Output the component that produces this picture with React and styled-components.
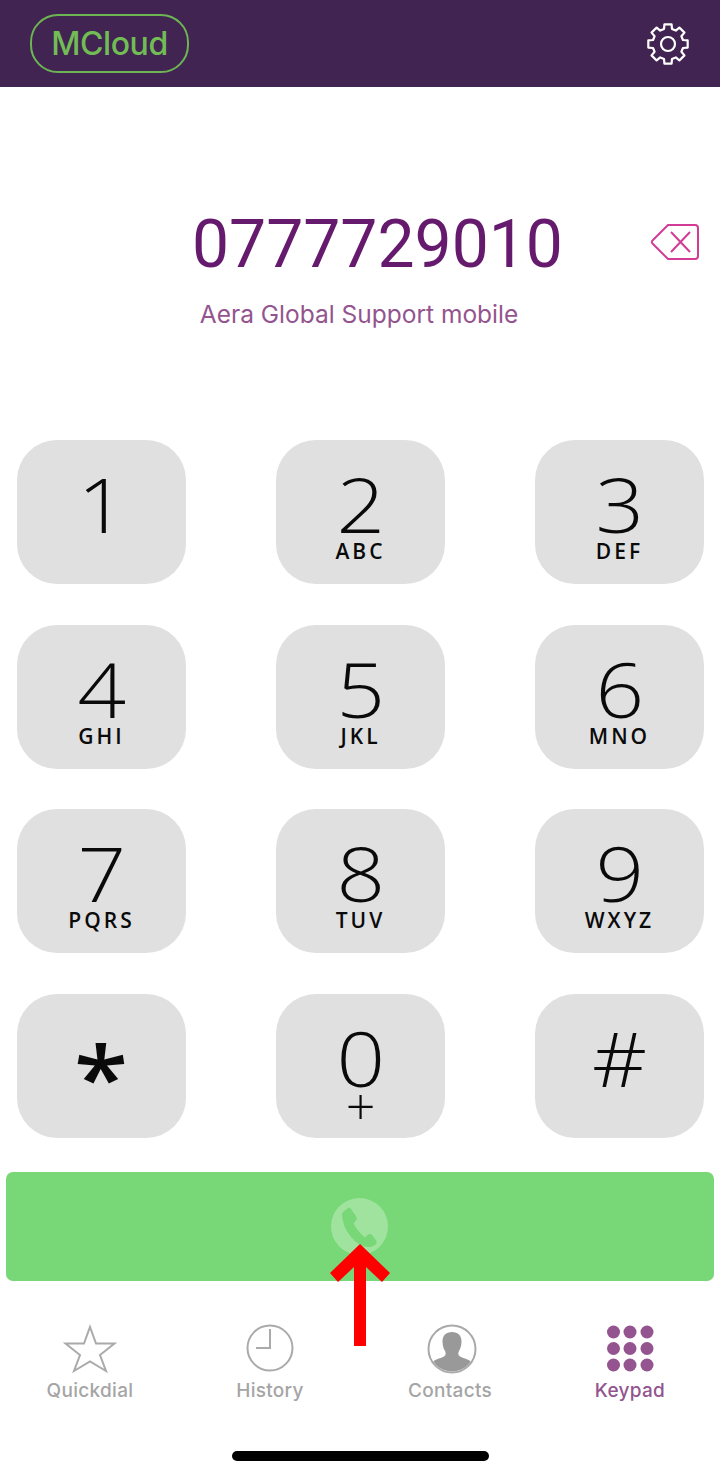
import React from "react";
import styled, { createGlobalStyle } from "styled-components";

const GlobalStyle = createGlobalStyle`
  html, body {
    margin: 0;
    padding: 0;
    background: #fff;
  }
  * {
    box-sizing: border-box;
  }
`;

const keys = [
  ["1", ""],
  ["2", "ABC"],
  ["3", "DEF"],
  ["4", "GHI"],
  ["5", "JKL"],
  ["6", "MNO"],
  ["7", "PQRS"],
  ["8", "TUV"],
  ["9", "WXYZ"],
  ["*", ""],
  ["0", "+"],
  ["#", ""],
];

// eight square teeth round a hub
const gearPath = () => {
  const points = [];
  for (let i = 0; i < 8; i++) {
    const mid = (i * Math.PI) / 4 - Math.PI / 2;
    [
      [15.5, -0.26],
      [20, -0.18],
      [20, 0.18],
      [15.5, 0.26],
    ].forEach(([r, offset]) => {
      points.push(
        `${(24 + r * Math.cos(mid + offset)).toFixed(2)} ${(24 + r * Math.sin(mid + offset)).toFixed(2)}`
      );
    });
  }
  return `M${points.join("L")}Z`;
};

const GearIcon = () => (
  <svg width="48" height="48" viewBox="0 0 48 48" fill="none" stroke="#fff" strokeWidth="2.2" strokeLinejoin="round">
    <path d={gearPath()} />
    <circle cx="24" cy="24" r="7" />
  </svg>
);

const PhoneIcon = () => (
  <svg width="38" height="42" viewBox="0 0 38 42" fill="#78d776">
    <path d="M2 7L8 2Q10 1 11 3L16.500 11Q17.500 13 15.500 15L13.500 17.500Q18 26 25 31.500L27.500 29Q30 27 32 29L36.500 35Q37.500 37 35 39L31 41Q20 42 11 31Q2 20 2 7Z" />
  </svg>
);

const StarIcon = () => (
  <svg width="54" height="50" viewBox="0 0 54 50" fill="none" stroke="#aaa" strokeWidth="2">
    <path d="M27 3L33 19.500H51.500L37 31L43 47L27 37.500L11 47L17 31L2.500 19.500H21Z" />
  </svg>
);

const ClockIcon = () => (
  <svg width="48" height="48" viewBox="0 0 48 48" fill="none" stroke="#aaa" strokeWidth="2">
    <circle cx="24" cy="24" r="22.500" />
    <path d="M24 5V24H10" />
  </svg>
);

const ContactIcon = () => (
  <svg width="54" height="50" viewBox="0 0 54 50">
    <defs>
      <clipPath id="contact-clip">
        <circle cx="29" cy="25" r="22.500" />
      </clipPath>
    </defs>
    <g clipPath="url(#contact-clip)" fill="#999">
      <path d="M29 8c6 0 9.500 3.500 9.500 9.500 0 4-1 7-2.500 9.500-1 2-1 4.500 1 5.500 4 2 10 3 13 7v11H8V39.500c3-4 9-5 13-7 2-1 2-3.500 1-5.500-1.500-2.500-2.500-5.500-2.500-9.500C19.500 11.500 23 8 29 8Z" />
    </g>
    <circle cx="29" cy="25" r="23.500" fill="none" stroke="#aaa" strokeWidth="2" />
  </svg>
);

const KeypadIcon = () => (
  <svg width="48" height="48" viewBox="0 0 48 48" fill="#93548f">
    {[8, 24.5, 41].map((cy) =>
      [7.5, 24, 41].map((cx) => <circle key={`${cx}-${cy}`} cx={cx} cy={cy} r="6.500" />)
    )}
  </svg>
);

const tabs = [
  { label: "Quickdial", icon: <StarIcon /> },
  { label: "History", icon: <ClockIcon /> },
  { label: "Contacts", icon: <ContactIcon /> },
  { label: "Keypad", icon: <KeypadIcon />, active: true },
];

const App = () => (
  <Page>
    <GlobalStyle />
    <Header>
      <Brand>MCloud</Brand>
      <GearIcon />
    </Header>

    <Display>
      <NumberRow>
        <PhoneNumber>0777729010</PhoneNumber>
        <Backspace width="50" height="36" viewBox="0 0 50 36">
          <path d="M18 1H45a3 3 0 0 1 3 3V32a3 3 0 0 1-3 3H18L2.500 19.500a2 2 0 0 1 0-3Z" />
          <path d="M21 8L40 28M40 8L21 28" />
        </Backspace>
      </NumberRow>
      <ContactName>Aera Global Support mobile</ContactName>
    </Display>

    <Keypad>
      {keys.map(([digit, letters]) => (
        <Key key={digit}>
          <Digit $star={digit === "*"}>{digit}</Digit>
          {letters && <Letters $plus={letters === "+"}>{letters}</Letters>}
        </Key>
      ))}
    </Keypad>

    <CallBar>
      <CallCircle>
        <PhoneIcon />
      </CallCircle>
      <Arrow width="60" height="102" viewBox="0 0 60 102">
        <path d="M30 0L60 29L52 38L36 23V102H24V23L8 38L0 29Z" fill="#ff0000" />
      </Arrow>
    </CallBar>

    <Tabs>
      {tabs.map((tab) => (
        <Tab key={tab.label} $active={tab.active}>
          <TabIcon>{tab.icon}</TabIcon>
          {tab.label}
        </Tab>
      ))}
    </Tabs>

    <HomeIndicator />
  </Page>
);

export default App;

const Page = styled.div`
  width: 720px;
  height: 1476px;
  overflow: hidden;
  background: #fff;
  display: flex;
  flex-direction: column;
`;

const Header = styled.header`
  height: 87px;
  flex: none;
  background: #412451;
  display: flex;
  align-items: center;
  justify-content: space-between;
  padding: 0 28px 0 30px;
`;

const Brand = styled.div`
  width: 159px;
  height: 59px;
  border: 2px solid #6cb552;
  border-radius: 28px;
  display: flex;
  align-items: center;
  justify-content: center;
  color: #72bc55;
  font-family: "Inter", "Liberation Sans", sans-serif;
  font-size: 32px;
  font-weight: 500;
  letter-spacing: -0.4px;
`;

const Display = styled.section`
  height: 353px;
  flex: none;
  padding-top: 120px;
`;

const NumberRow = styled.div`
  display: flex;
  align-items: center;
  justify-content: space-between;
  padding: 0 20px 0 192px;
`;

const PhoneNumber = styled.div`
  color: #651a6d;
  font-family: "Roboto", "Liberation Sans", sans-serif;
  font-size: 66px;
  line-height: 76px;
`;

const Backspace = styled.svg`
  margin-bottom: 6px;
  fill: none;
  stroke: #d23c96;
  stroke-width: 2;
`;

const ContactName = styled.div`
  margin-top: 15px;
  padding-right: 2px;
  text-align: center;
  color: #93548f;
  font-family: "Inter", "Liberation Sans", sans-serif;
  font-size: 24.5px;
  line-height: 32px;
`;

const Keypad = styled.section`
  display: grid;
  grid-template-columns: repeat(3, 169px);
  grid-auto-rows: 144px;
  justify-content: space-between;
  row-gap: 40.5px;
  padding: 0 16px 0 17px;
`;

const Key = styled.div`
  background: #e0e0e0;
  border-radius: 40px;
  display: flex;
  flex-direction: column;
  align-items: center;
  padding-top: 33px;
  color: #0a0a0a;
  font-family: "Open Sans", "DejaVu Sans", sans-serif;
`;

const Digit = styled.div`
  font-size: ${(props) => (props.$star ? "88px" : "76px")};
  font-weight: ${(props) => (props.$star ? 600 : 350)};
  line-height: 62px;
  margin-top: ${(props) => (props.$star ? "19px" : "0")};
  transform: scaleX(1.12);
`;

const Letters = styled.div`
  margin-top: 4px;
  font-size: ${(props) => (props.$plus ? "52px" : "21px")};
  line-height: 24px;
  font-weight: ${(props) => (props.$plus ? 350 : 600)};
  letter-spacing: ${(props) => (props.$plus ? "0" : "3px")};
`;

const CallBar = styled.section`
  position: relative;
  flex: none;
  height: 109px;
  margin: 34.5px 6px 0;
  background: #78d776;
  border-radius: 7px;
  display: flex;
  align-items: center;
  justify-content: center;
`;

const CallCircle = styled.div`
  width: 57px;
  height: 57px;
  margin-left: -2px;
  border-radius: 50%;
  background: #9fe39e;
  display: flex;
  align-items: center;
  justify-content: center;
`;

const Arrow = styled.svg`
  position: absolute;
  left: 324px;
  top: 72px;
`;

const Tabs = styled.nav`
  display: grid;
  grid-template-columns: repeat(4, 180px);
  padding-top: 43px;
`;

const Tab = styled.div`
  display: flex;
  flex-direction: column;
  align-items: center;
  color: ${(props) => (props.$active ? "#93548f" : "#a5a5a5")};
  font-family: "Inter", "Liberation Sans", sans-serif;
  font-size: 19px;
  line-height: 22px;
  font-weight: 500;
  letter-spacing: 0.3px;
`;

const TabIcon = styled.div`
  height: 56px;
  display: flex;
  align-items: flex-start;
  justify-content: center;
`;

const HomeIndicator = styled.div`
  width: 257px;
  height: 10px;
  margin: 49px auto 0;
  border-radius: 5px;
  background: #000;
`;
